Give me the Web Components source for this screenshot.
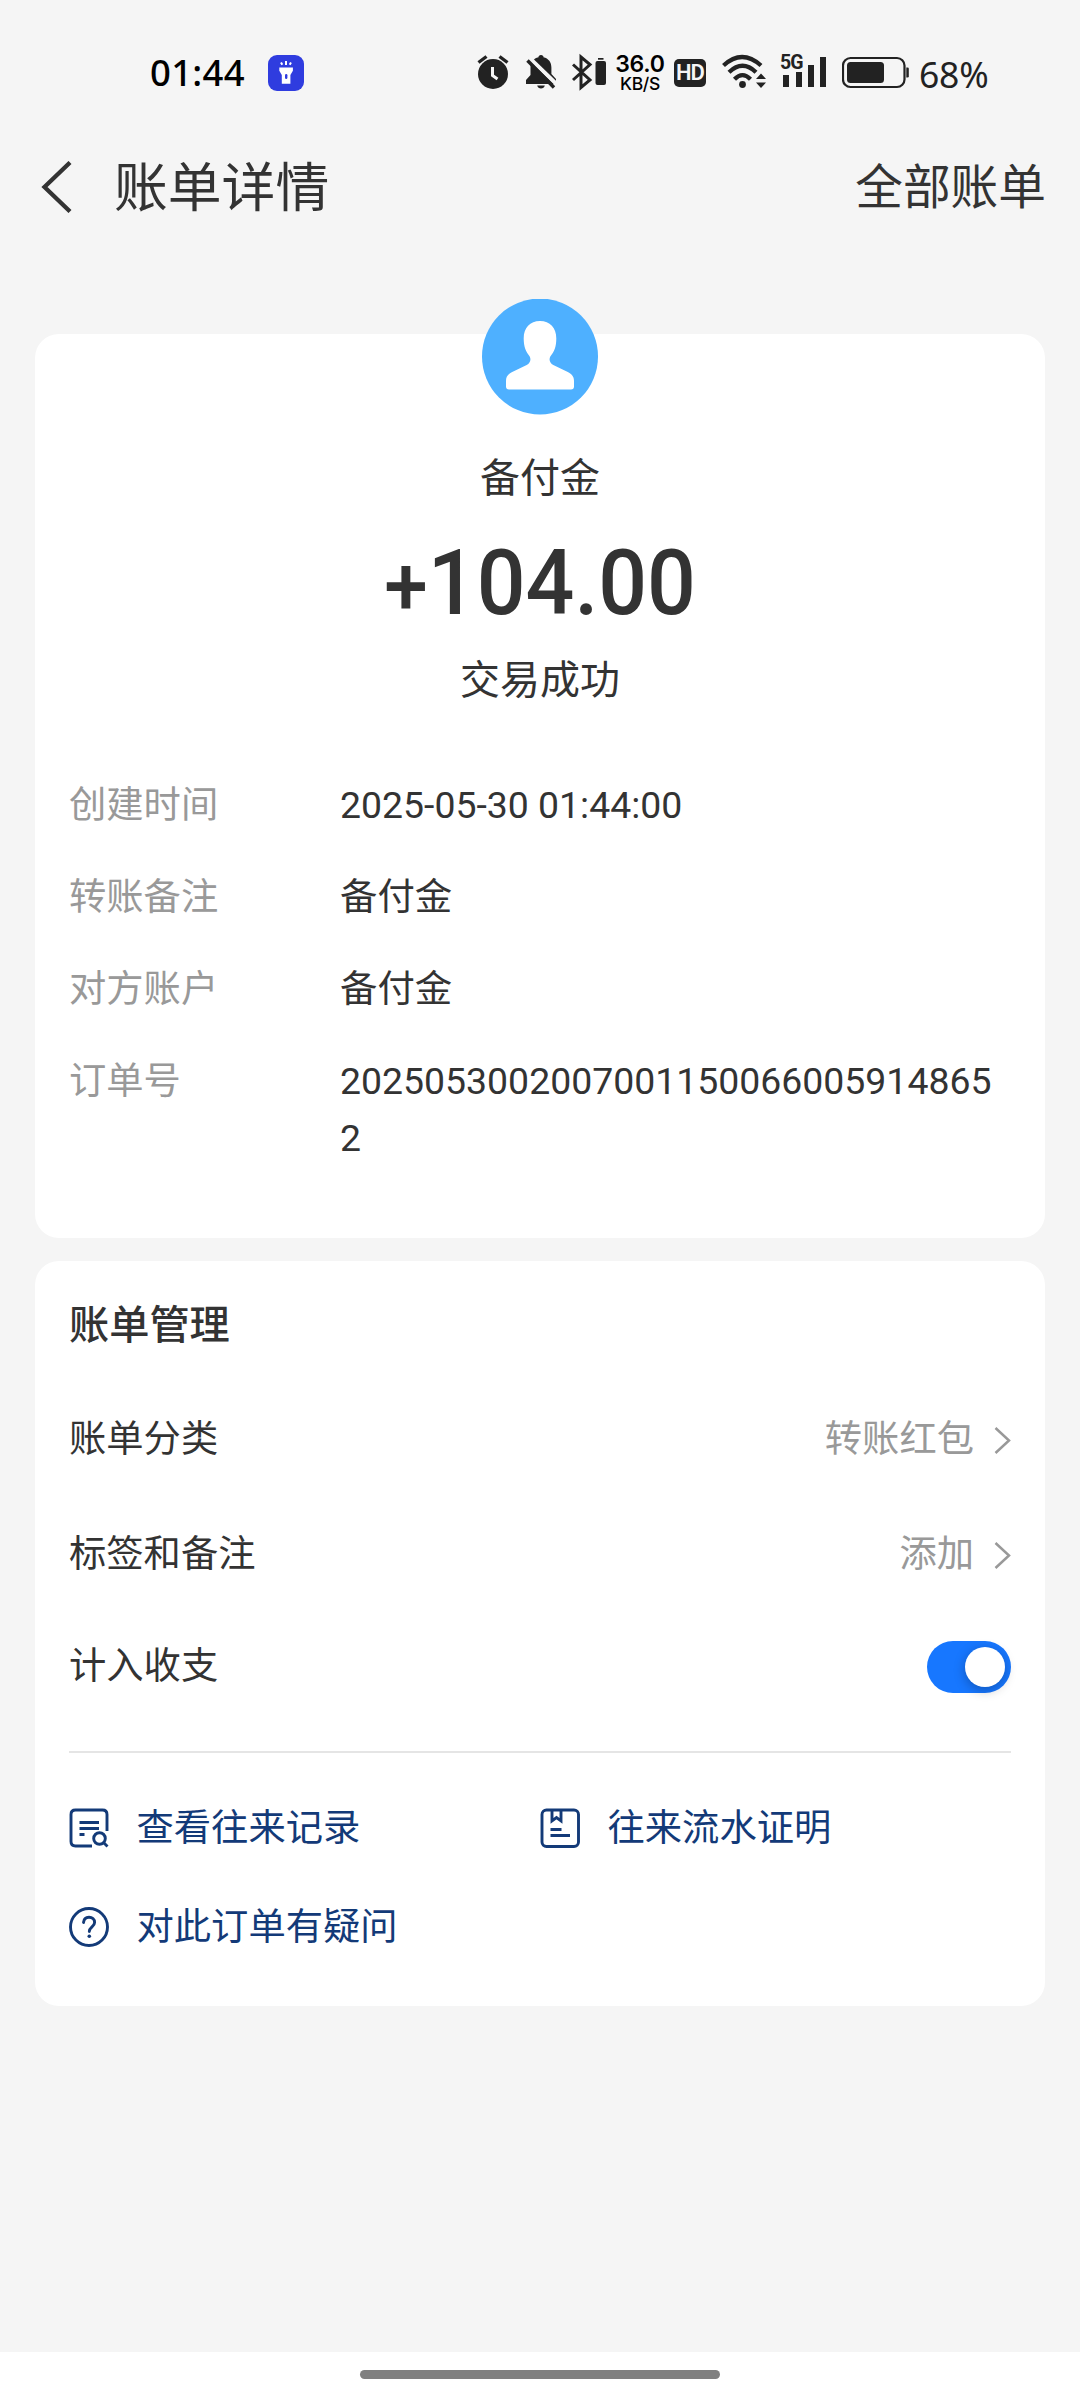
<!DOCTYPE html>
<html lang="zh-CN">
<head>
<meta charset="utf-8">
<title>账单详情</title>
<style>
html,body{margin:0;padding:0}
body{width:1080px;height:2400px;background:#f5f5f5;color:#333;font-family:"Noto Sans CJK SC",sans-serif;overflow:hidden}
</style>
</head>
<body>
<bill-page></bill-page>
<script>
const define = (name, html) => {
  const t = document.createElement('template');
  t.innerHTML = html;
  customElements.define(name, class extends HTMLElement {
    constructor() {
      super();
      this.attachShadow({ mode: 'open' }).appendChild(t.content.cloneNode(true));
    }
  });
};

define('status-bar', `
<style>
:host{display:flex;align-items:flex-start;height:58px;padding:52px 0 0 150px;color:#000;font-family:"Noto Sans",sans-serif;white-space:nowrap}
svg{display:block;flex:none}
.time{width:118px;font-size:36.5px;line-height:40px;font-weight:500;letter-spacing:.3px}
.speed{width:52px;margin:2px 8px 0 6px;text-align:center;font-family:Inter,sans-serif;font-weight:600}
.speed div:first-child{font-size:23px;line-height:21px;letter-spacing:-.2px}
.speed div:last-child{font-size:17.5px;line-height:18px;letter-spacing:-.3px;font-weight:500}
.hd{width:32px;height:28px;margin-top:7px;border-radius:5px;background:#222;color:#f5f5f5;font:600 22px/28px Roboto,sans-serif;text-align:center;letter-spacing:-1px}
.sig{position:relative;width:48px;height:40px;margin-left:13px}
.sig span{position:absolute;left:0;top:2px;font:700 19.5px/18px Roboto,sans-serif;color:#222;letter-spacing:-1px}
.pct{color:#222;font-size:35.5px;line-height:40px;margin:2px 0 0 9px;letter-spacing:-.2px}
</style>
<div class="time">01:44</div>
<svg width="36" height="40" viewBox="268 52 36 40"><rect x="268" y="55" width="36" height="36" rx="9" fill="#2f3cdf"/><g fill="#fff"><path d="M279.3 67.5h13.6v3.2l-2.5 4.3v8.8h-8.6V75l-2.5-4.3z"/><rect x="285" y="74" width="2.4" height="5" rx="1.2" fill="#2f3cdf"/></g><path d="M286 61v4M281 62.5l1.3 2.2M291 62.5l-1.3 2.2" stroke="#fff" stroke-width="2" fill="none"/></svg>
<svg style="margin-left:173px" width="32" height="40" viewBox="477 52 32 40"><circle cx="493" cy="74" r="15" fill="#222"/><path d="M478.5 62.5l8-6M507.500 62.5l-8-6" stroke="#222" stroke-width="3.4"/><path d="M492.500 67v8.500l5 3.500" fill="none" stroke="#f5f5f5" stroke-width="3"/></svg>
<svg style="margin-left:16px" width="32" height="40" viewBox="525 52 32 40"><path d="M541 55c1.600 0 2.500 1 2.500 2.200 5 1.200 7.900 5 7.900 10.300v6.500l4.600 5v5h-30v-4l4.500-5v-7.500c0-5.300 3-9.100 8-10.300 0-1.200.9-2.200 2.500-2.200zM537.200 85.500h7.600c-.6 4-7 4-7.600 0z" fill="#222"/><path d="M530 58.500l26.500 25.500" stroke="#f5f5f5" stroke-width="4"/><path d="M527.500 60.500l26.500 27" stroke="#222" stroke-width="3.400"/></svg>
<svg style="margin-left:15px" width="36" height="40" viewBox="572 52 36 40"><path d="M573 64.500l17 15.500-9 7.500V57l9 7.500L573 80" fill="none" stroke="#222" stroke-width="3"/><rect x="595.500" y="61" width="10.500" height="24" rx="2" fill="#222"/><rect x="598" y="58" width="5.500" height="1.700" fill="#222"/></svg>
<div class="speed"><div>36.0</div><div>KB/S</div></div>
<div class="hd">HD</div>
<svg style="margin-left:16px" width="45" height="40" viewBox="723 52 45 40"><g fill="none" stroke="#222" stroke-width="4.300"><path d="M724.500 65.500Q743 48.500 762 65.500"/><path d="M730 72.200Q743.500 59.500 757 72.200"/><path d="M735.500 79.200Q743.500 71 751.500 79.200"/></g><circle cx="743.500" cy="84.500" r="3.400" fill="#222"/><path d="M762 73.500l5 5.500h-10zM762 88l5-5.500h-10z" fill="#222"/></svg>
<div class="sig"><svg width="48" height="40" viewBox="781 52 48 40"><path d="M784 75h6v12h-6zM797 72h6v15h-6zM809 65h6v22h-6zM821 57h6v30h-6z" fill="#222"/></svg><span>5G</span></div>
<svg style="margin-left:14px" width="68" height="40" viewBox="843 52 68 40"><rect x="844" y="58" width="61.500" height="29" rx="7.500" fill="none" stroke="#222" stroke-width="2.200"/><rect x="848" y="62" width="37" height="21" rx="3.500" fill="#222"/><path d="M907.300 67.500h1.200q1.300 0 1.300 1.300v7.400q0 1.300-1.300 1.300h-1.200z" fill="#222"/></svg>
<div class="pct">68%</div>`);

define('nav-bar', `
<style>
:host{display:flex;align-items:center;height:154px;padding:0 34px 0 40px}
h1{margin:-6px 0 0 41px;font-weight:400;font-size:53.800px;line-height:70px;flex:1}
a{font-size:47.700px;line-height:64px;margin-top:-6px}
</style>
<svg width="33" height="52" viewBox="0 0 33 52"><path d="M30 1.500L4.500 26 30 50.500" fill="none" stroke="#333" stroke-width="4.300"/></svg>
<h1><slot></slot></h1><a><slot name="action"></slot></a>`);

define('bill-card', `
<style>:host{display:block;box-sizing:border-box;margin:0 35px;background:#fff;border-radius:24px;padding:0 34px}</style><slot></slot>`);

define('payee-summary', `
<style>
:host{display:flex;flex-direction:column;align-items:center;font-size:40px;line-height:57px}
svg{display:block;margin-top:-35px}
.name{margin-top:32px}
.amount{display:flex;align-items:baseline;margin-top:35px;height:90px;font:500 90px/90px Roboto,sans-serif;transform:scaleX(.955)}
.state{margin-top:20px}
</style>
<svg width="116" height="116" viewBox="0 0 116 116"><circle cx="58" cy="57.500" r="58" fill="#4eb0ff"/><path d="M58 22c10 0 16.300 6.500 16.300 17.500 0 8-2 13-6 18-1.700 3.500-.3 6.500 3 8.500l14.500 7c5 2.500 6.200 5.500 6.200 9v5.500q0 3-3 3H27q-3 0-3-3V82c0-3.500 1.200-6.500 6.200-9L44.700 66c3.300-2 4.700-5 3-8.500-4-5-6-10-6-18C41.700 28.500 48 22 58 22z" fill="#fff"/></svg>
<div class="name"><slot name="name"></slot></div>
<div class="amount"><slot name="amount"></slot></div>
<div class="state"><slot name="state"></slot></div>`);

define('detail-row', `
<style>
:host{display:flex;align-items:baseline;margin-bottom:32px;font-size:37.300px;line-height:57px}
.k{width:271px;color:#999}
.v{width:670px;font-family:Roboto,"Noto Sans CJK SC",sans-serif;font-size:37.400px;word-break:break-all}
</style>
<div class="k"><slot name="label"></slot></div><div class="v"><slot></slot></div>`);

define('manage-row', `
<style>
:host{display:flex;align-items:center;justify-content:space-between;height:115px;font-size:37.300px;line-height:57px}
.v{display:flex;align-items:center;color:#999}
</style>
<div><slot name="label"></slot></div><div class="v"><slot></slot></div>`);

define('chevron-right', `
<style>:host{display:block;margin:7px 0 0 20px}svg{display:block}</style>
<svg width="17" height="27" viewBox="0 0 17 27"><path d="M1.500 1L15 13.500 1.500 26" fill="none" stroke="#999" stroke-width="2.500"/></svg>`);

define('toggle-switch', `
<style>
:host{display:flex;justify-content:flex-end;box-sizing:border-box;width:84px;height:52px;padding:6px;border-radius:26px;background:#1777ff}
i{width:40px;height:40px;border-radius:50%;background:#fff;box-shadow:0 3px 12px rgba(0,0,0,.28)}
</style><i></i>`);

define('bill-link', `
<style>
:host{display:flex;align-items:center;gap:27.500px;height:98px;font-size:37.300px;line-height:57px;color:#133a78}
.i{width:40px;height:40px;margin-top:6px}
::slotted(svg){display:block}
</style><div class="i"><slot name="icon"></slot></div><div><slot></slot></div>`);

define('home-indicator', `
<style>
:host{display:flex;justify-content:center;align-items:flex-start;box-sizing:border-box;height:48px;padding-top:18px;margin-top:auto;background:#fff}
i{width:360px;height:9px;border-radius:5px;background:#808080}
</style><i></i>`);

define('bill-page', `
<style>
:host{display:flex;flex-direction:column;width:1080px;height:2400px;background:#f5f5f5;color:#333}
.first{margin-top:70px;height:904px}
.sign{font-size:82px}
.details{padding-top:67.500px}
.second{margin-top:23px;height:745px;padding-top:32px}
h2{margin:0 0 29px;font-size:40.200px;line-height:57px;font-weight:500}
.count{height:116px}
.count span{display:block;margin-top:-7px}
hr{border:0;height:2px;margin:26px 0 23px;background:#e5e5e5}
.links{display:grid;grid-template-columns:471px 471px;row-gap:1px}
.links g{fill:none;stroke:#133a78;stroke-width:2.900}
</style>
<status-bar></status-bar>
<nav-bar>账单详情<span slot="action">全部账单</span></nav-bar>
<bill-card class="first">
  <payee-summary><span slot="name">备付金</span><span slot="amount"><span class="sign">+</span>104.00</span><span slot="state">交易成功</span></payee-summary>
  <div class="details">
    <detail-row><span slot="label">创建时间</span>2025-05-30 01:44:00</detail-row>
    <detail-row><span slot="label">转账备注</span>备付金</detail-row>
    <detail-row><span slot="label">对方账户</span>备付金</detail-row>
    <detail-row><span slot="label">订单号</span>20250530020070011500660059148652</detail-row>
  </div>
</bill-card>
<bill-card class="second">
  <h2>账单管理</h2>
  <manage-row><span slot="label">账单分类</span>转账红包<chevron-right></chevron-right></manage-row>
  <manage-row><span slot="label">标签和备注</span>添加<chevron-right></chevron-right></manage-row>
  <manage-row class="count"><span slot="label">计入收支</span><toggle-switch></toggle-switch></manage-row>
  <hr>
  <div class="links">
    <bill-link><svg slot="icon" width="40" height="40" viewBox="0 0 40 40"><g><path d="M38 23V6.500Q38 2 33.500 2H6.500Q2 2 2 6.500v27Q2 38 6.500 38H23"/><path d="M10.500 14.500H30M10.500 20.500H30M10.500 26.500h5"/><circle cx="30.500" cy="30.500" r="5.800"/><path d="M34.500 34.500l4 4"/></g></svg>查看往来记录</bill-link>
    <bill-link><svg slot="icon" width="40" height="40" viewBox="0 0 40 40"><g><rect x="2" y="2" width="36.500" height="36.500" rx="4.500"/><path d="M12 2v10.800l4.500-3.300 4.500 3.300V2M10.500 21.500h11M10.500 27.500H30"/></g></svg>往来流水证明</bill-link>
    <bill-link><svg slot="icon" width="40" height="40" viewBox="0 0 40 40"><g><circle cx="20" cy="20" r="18.500"/><path d="M14.500 15.500c.3-3.300 2.600-5.200 5.500-5.200 3.200 0 5.600 2 5.600 5.100 0 4.300-5.300 4.600-5.300 9.100" stroke-linecap="round"/></g><circle cx="20.300" cy="29.200" r="1.800" fill="#133a78"/></svg>对此订单有疑问</bill-link>
  </div>
</bill-card>
<home-indicator></home-indicator>`);
</script>
</body>
</html>
